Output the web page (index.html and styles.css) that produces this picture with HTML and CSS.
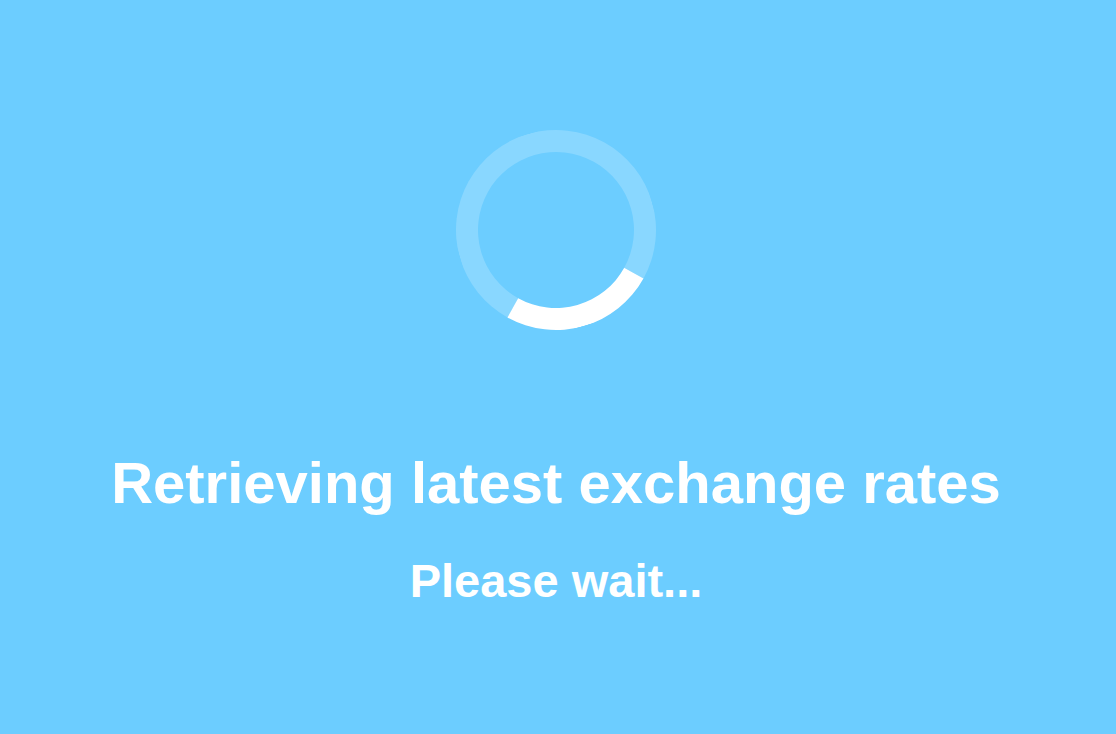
FILE: index.html
```html
<!DOCTYPE html>
<html>
<head>
<meta charset="utf-8">
<link rel="stylesheet" href="styles.css">
</head>
<body>
<main class="loader">
  <div class="spinner"></div>
  <h1 class="title">Retrieving latest exchange rates</h1>
  <p class="subtitle">Please wait...</p>
</main>
</body>
</html>
```
FILE: styles.css
```css
html, body {
  margin: 0;
  padding: 0;
  height: 100%;
}
body {
  background: #6ccdff;
  font-family: "Liberation Sans", Arial, Helvetica, sans-serif;
  color: #ffffff;
}
.loader {
  display: flex;
  flex-direction: column;
  align-items: center;
  padding: 130px 4px 0 0;
}
.spinner {
  width: 156px;
  height: 156px;
  border: 22px solid rgba(255, 255, 255, 0.2);
  border-bottom-color: #ffffff;
  border-radius: 50%;
  transform: rotate(-16deg);
}
.title {
  margin: 120px 0 0;
  font-size: 58px;
  line-height: 66px;
  font-weight: bold;
  text-align: center;
}
.subtitle {
  margin: 38px 0 0;
  font-size: 47px;
  line-height: 54px;
  font-weight: bold;
  text-align: center;
}
```
